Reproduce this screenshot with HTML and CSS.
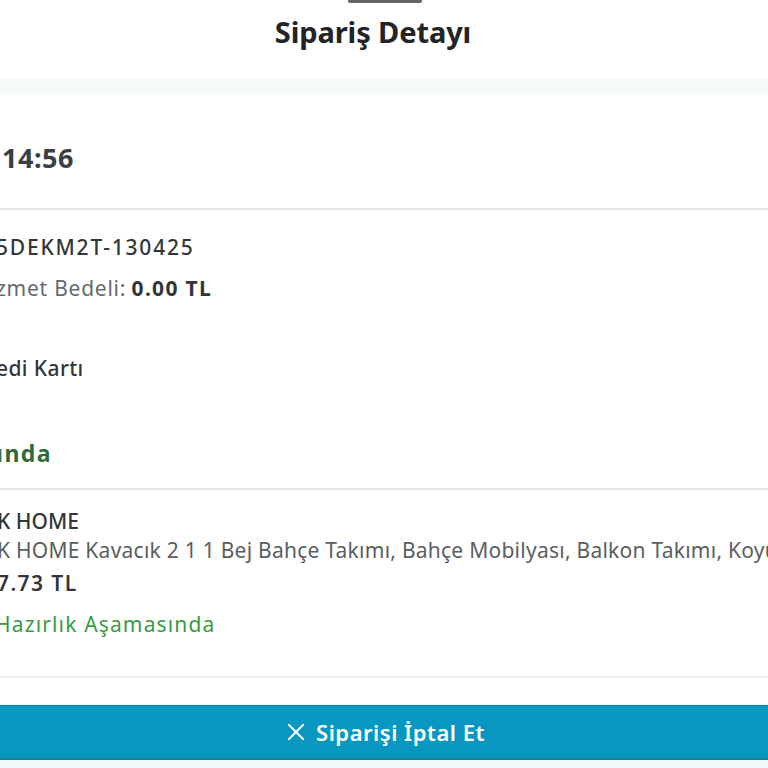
FILE: index.html
```html
<!DOCTYPE html>
<html lang="tr">
<head>
<meta charset="utf-8">
<title>Sipariş Detayı</title>
<link rel="stylesheet" href="styles.css">
</head>
<body>
<div class="sheet">
  <div class="grabber"></div>
  <h1 class="title">Sipariş Detayı</h1>
  <div class="strip"></div>

  <section class="date-section">
    <div class="date">14:56</div>
  </section>
  <div class="divider"></div>

  <section class="info">
    <div class="row value code">5DEKM2T-130425</div>
    <div class="row"><span class="label">zmet Bedeli:</span> <span class="strong">0.00 TL</span></div>
    <div class="row"></div>
    <div class="row value">edi Kartı</div>
    <div class="row"></div>
    <div class="row status">ında</div>
  </section>
  <div class="divider"></div>

  <section class="product">
    <div class="p-brand">K HOME</div>
    <div class="p-name">K HOME Kavacık 2 1 1 Bej Bahçe Takımı, Bahçe Mobilyası, Balkon Takımı, Koyu Gri Minder</div>
    <div class="p-price">7.73 TL</div>
    <div class="p-status">Hazırlık Aşamasında</div>
  </section>
  <div class="divider light"></div>

  <div class="footer">
    <button class="cancel" type="button">
      <svg class="x-icon" viewBox="0 0 18 18" width="18" height="18" aria-hidden="true"><path d="M2 2 L16 16 M16 2 L2 16" stroke="#ffffff" stroke-width="2" stroke-linecap="square" fill="none"/></svg>
      <span class="cancel-text">Siparişi İptal Et</span>
    </button>
  </div>
</div>
</body>
</html>
```

FILE: styles.css
```css
* { box-sizing: border-box; }
html, body {
  margin: 0;
  padding: 0;
  width: 768px;
  height: 768px;
  overflow: hidden;
  background: #ffffff;
  font-family: "Noto Sans", "Open Sans", sans-serif;
}
.sheet {
  display: flex;
  flex-direction: column;
  height: 768px;
}
.grabber {
  align-self: center;
  width: 74px;
  height: 3px;
  margin-left: 2px;
  background: #666666;
  border-radius: 0 0 2px 2px;
}
.title {
  margin: 10px 0 0;
  padding-right: 22px;
  text-align: center;
  font-size: 29px;
  line-height: 38px;
  font-weight: 700;
  color: #222426;
  letter-spacing: -0.1px;
}
.strip {
  margin-top: 27px;
  height: 17px;
  background: #f7fafb;
}
.date-section {
  height: 113px;
  display: flex;
  align-items: center;
  padding-left: 2px;
}
.date {
  font-size: 27px;
  font-weight: 700;
  color: #3a3f44;
  line-height: 30px;
  margin-top: 12px;
  letter-spacing: 0.5px;
}
.divider {
  height: 2px;
  background: #e6e6e6;
}
.divider.light {
  background: #efefef;
}
.info {
  padding-top: 25px;
  padding-bottom: 21px;
  display: flex;
  flex-direction: column;
  margin-left: -4px;
}
.row {
  height: 41px;
  line-height: 24px;
  font-size: 21px;
  color: #333638;
  white-space: nowrap;
}
.row.value { font-weight: 500; letter-spacing: 0.4px; }
.row.code { letter-spacing: 1.8px; }
.row:nth-child(4) { margin-top: -2px; }
.label { color: #666a6d; letter-spacing: 0.75px; }
.strong { font-weight: 700; color: #333638; letter-spacing: 1.3px; }
.row.status {
  margin-top: 1px;
  height: 28px;
  line-height: 28px;
  font-size: 23px;
  font-weight: 700;
  color: #2f6b3a;
  letter-spacing: 1.5px;
}
.product {
  padding-top: 19px;
  height: 186px;
  display: flex;
  flex-direction: column;
  margin-left: -3px;
  white-space: nowrap;
}
.p-brand {
  font-size: 21px;
  line-height: 24px;
  font-weight: 500;
  color: #333638;
}
.p-name {
  margin-top: 5px;
  font-size: 21px;
  line-height: 24px;
  color: #5a5e61;
  letter-spacing: 0.25px;
}
.p-price {
  margin-top: 9px;
  font-size: 21px;
  line-height: 25px;
  font-weight: 600;
  color: #333638;
  letter-spacing: 1.4px;
}
.p-status {
  margin-top: 15px;
  font-size: 21px;
  line-height: 26px;
  color: #3a9a45;
  margin-left: -2px;
  letter-spacing: 1.15px;
}
.footer {
  margin-top: 26px;
  border-top: 1px solid #dff3f8;
  background: #eef9fc;
  flex: 1;
}
.cancel {
  display: flex;
  align-items: center;
  justify-content: center;
  gap: 11px;
  width: 100%;
  height: 55px;
  margin: 0;
  padding: 0 0 0 4px;
  border: 0;
  border-top: 1px solid #1b7f97;
  border-bottom: 2px solid #1b7f97;
  background: #0797c1;
  color: #ffffff;
  font-family: "Noto Sans", "Open Sans", sans-serif;
  font-size: 22px;
  font-weight: 600;
}
.cancel-text { letter-spacing: 0.5px; }
.x-icon { flex: none; }
```
